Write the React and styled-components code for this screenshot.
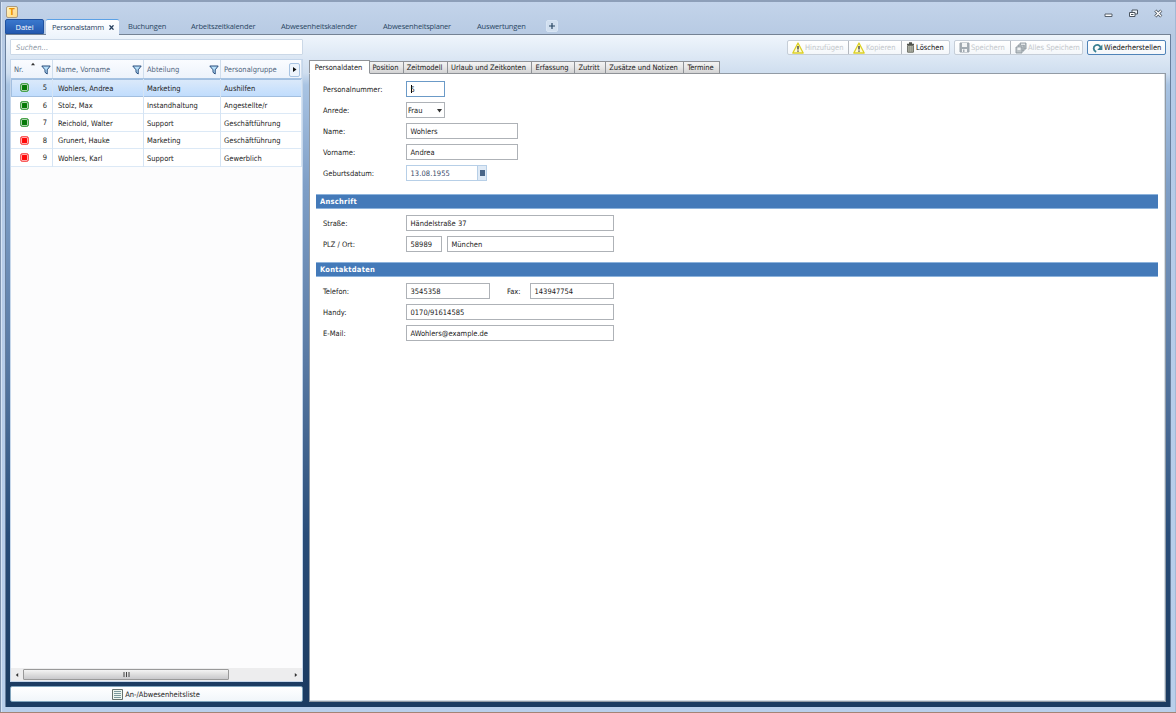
import React from "react";
import styled, { createGlobalStyle } from "styled-components";

const Global = createGlobalStyle`
  * { box-sizing: border-box; }
  body { margin: 0; overflow: hidden; }
  body, input, button { font: 7.5px "DejaVu Sans Condensed", "DejaVu Sans", sans-serif; color: #222; }
  svg { display: block; flex: none; }
`;

const Text = styled.span`
  white-space: pre;
  letter-spacing: ${(p) => p.$ls ?? 0}px;
`;

const Window = styled.div`
  width: 1176px;
  height: 713px;
  display: flex;
  flex-direction: column;
  padding: 0 5px;
  background: linear-gradient(#c3d4ea, #b7cae3 34px, #b5cbe8 70px, #b9cfeb);
  border-top: 2px solid #8d9fb8;
  border-bottom: 1px solid #a38476;
  box-shadow: inset 1px 0 #8195b0, inset 2px 0 #d7e5f6, inset -1px 0 #a3b9d5;
`;

const TitleBar = styled.header`
  height: 17px;
  display: flex;
  justify-content: space-between;
  padding: 4px 8px 0 1px;
`;

const AppIcon = styled.div`
  width: 12px;
  height: 12px;
  border: 1px solid #a99b83;
  border-radius: 2px;
  background: linear-gradient(135deg, #fff3c5, #ffd981);
  color: #eb9200;
  font-size: 9px;
  font-weight: bold;
  line-height: 10px;
  text-align: center;
`;

const Controls = styled.div`
  display: flex;
  gap: 16px;
  padding-top: 3px;
`;

const MainTabs = styled.nav`
  height: 16px;
  display: flex;
  align-items: stretch;
  font: 7.5px "Open Sans", "Noto Sans", sans-serif;
  color: #294663;
  border-bottom: 1px solid #748294;
`;

const FileTab = styled.div`
  width: 39px;
  display: flex;
  align-items: center;
  justify-content: center;
  border-radius: 2px 2px 0 0;
  border: 1px solid #1f519f;
  background: linear-gradient(#3a78cd, #2459b0);
  color: #fff;
`;

const MainTab = styled.div`
  display: flex;
  align-items: center;
  width: ${(p) => p.$w}px;
  padding-bottom: 2px;
`;

const ActiveTab = styled(MainTab)`
  margin: 0 9px -1px 2px;
  justify-content: space-between;
  padding: 0 5px 2px 6px;
  border-top: 1px solid #5ba1e6;
  border-radius: 2px 2px 0 0;
  background: linear-gradient(#fff, #eff5fc);
  color: #283f5d;
`;

const CloseMark = styled.svg`
  margin-top: 2px;
`;

const AddTab = styled.div`
  width: 12px;
  height: 12px;
  margin-top: 1px;
  border: 1px solid #d8e5f4;
  border-radius: 2px;
  background: #d1dfef;
  display: grid;
  place-items: center;
`;

const Body = styled.main`
  height: 672px;
  display: flex;
  gap: 6px;
  padding: 4px 4px 5px 4px;
  border: solid #687f9d;
  border-width: 0 1px;
  background: linear-gradient(#eff5fc, #cfdeef 38px, #a9c4e3 50px, #7f9fc7 150px, #5879a3 330px, #294d79 500px, #1c3c62 650px);
`;

const Sidebar = styled.aside`
  width: 293px;
  display: flex;
  flex-direction: column;
`;

const Search = styled.div`
  height: 16px;
  padding: 0 5px;
  display: flex;
  align-items: center;
  background: #fff;
  border: 1px solid #cbd8e7;
  border-radius: 1px;
  color: #8d98a5;
  font-style: italic;
`;

const Grid = styled.section`
  height: 623px;
  margin: 4px 0;
  display: flex;
  flex-direction: column;
  background: #fcfcfd;
  border: 1px solid #c5d6ea;
`;

const gridColumns = "42px 91px 77px 1fr";

const GridHeader = styled.div`
  height: 19px;
  display: grid;
  grid-template-columns: ${gridColumns};
  background: linear-gradient(#fafcff, #edf3fb);
  border-bottom: 1px solid #a5c2e2;
`;

const HeadCell = styled.div`
  display: flex;
  align-items: center;
  justify-content: space-between;
  padding: 1px 1px 0 3px;
  border-right: 1px solid #d0deed;
  color: #51657e;
`;

const SortMark = styled.div`
  align-self: flex-start;
  padding: 1px 0 0 1px;
`;

const ScrollNext = styled.div`
  width: 11px;
  height: 14px;
  display: grid;
  place-items: center;
  border: 1px solid #a9c4e2;
  border-radius: 2px;
  background: #edf4fc;
`;

const Row = styled.div`
  height: 17.5px;
  display: grid;
  grid-template-columns: ${gridColumns};
  background: ${(p) => (p.$selected ? "linear-gradient(#dceafa, #bfdcfd)" : "#fff")};
  box-shadow: ${(p) => (p.$selected ? "inset 0 0 0 1px #a2bfe0" : "inset 0 -1px #dce9f6")};
`;

const Cell = styled.div`
  display: flex;
  align-items: center;
  padding-top: 1px;
  padding-left: ${(p) => p.$pl ?? 3}px;
  border-right: 1px solid #d5e4f4;
  color: #1d1d1d;
`;

const NumberCell = styled(Cell)`
  justify-content: space-between;
  padding: 0 5px 0 9px;
`;

const Status = styled.i`
  width: 9px;
  height: 9px;
  border-radius: 2.5px;
  border: 1px solid ${(p) => p.$ring};
  background: ${(p) => p.$color};
  box-shadow: inset 0 0 0 1px #ffffffaa;
`;

const Scrollbar = styled.div`
  height: 13px;
  margin-top: auto;
  display: flex;
  align-items: center;
  background: #ededee;
  padding: 1px 4px;
`;

const Thumb = styled.div`
  width: 206px;
  height: 11px;
  margin: 0 auto 0 4px;
  display: grid;
  place-items: center;
  border: 1px solid #999;
  border-radius: 1px;
  background: linear-gradient(#f4f4f4, #dedede 50%, #c9c9cc);
`;

const ListButton = styled.button`
  height: 16px;
  padding: 0 1px 0 0;
  display: flex;
  align-items: center;
  justify-content: center;
  gap: 2px;
  border: 1px solid #82a5bd;
  border-radius: 2px;
  background: linear-gradient(#fff, #f1f6fa);
`;

const Content = styled.section`
  flex: 1;
  display: flex;
  flex-direction: column;
`;

const Toolbar = styled.div`
  height: 21px;
  display: flex;
  justify-content: flex-end;
  align-items: flex-start;
  gap: 4px;
  padding-top: 1px;
`;

const ButtonGroup = styled.div`
  height: 15px;
  display: flex;
  border: 1px solid ${(p) => (p.$active ? "#4f83b8" : "#c6ced8")};
  border-radius: 2px;
  background: linear-gradient(#fff, #f4f7fa);
`;

const ToolButton = styled.div`
  width: ${(p) => p.$w}px;
  display: flex;
  align-items: center;
  padding-left: 4px;
  gap: 1px;
  color: ${(p) => (p.$disabled ? "#c3c7cb" : "#111")};
  & + & { border-left: 1px solid #b3b8bf; }
`;

const Tabs = styled.div`
  height: 14px;
  display: flex;
  align-items: flex-end;
  position: relative;
  z-index: 1;
  margin-bottom: -1px;
`;

const Tab = styled.div`
  width: ${(p) => p.$w}px;
  height: ${(p) => (p.$active ? 14 : 13)}px;
  display: flex;
  align-items: center;
  justify-content: center;
  padding-right: 2px;
  border: 1px solid #8f9297;
  border-left-width: ${(p) => (p.$active ? 1 : 0)}px;
  border-bottom-color: ${(p) => (p.$active ? "#fff" : "#8f9297")};
  background: ${(p) => (p.$active ? "#fff" : "linear-gradient(#f3f3f3, #e8e8e8 45%, #d2d2d3)")};
`;

const Panel = styled.div`
  flex: 1;
  border: 1px solid #929ba5;
  box-shadow: inset -1px -1px #d5dee6;
  background: #fff;
  padding: 7px 7px 0 6px;
`;

const Fields = styled.div`
  display: flex;
  flex-direction: column;
  gap: 5px;
  padding: 0 7px;
`;

const Field = styled.div`
  height: 16px;
  display: flex;
  align-items: center;
`;

const Label = styled.div`
  width: ${(p) => p.$w ?? 83}px;
  padding-left: ${(p) => p.$pl ?? 0}px;
`;

const Input = styled.div`
  width: ${(p) => p.$w}px;
  height: 16px;
  display: flex;
  align-items: center;
  justify-content: space-between;
  padding-left: ${(p) => p.$pl ?? 3.5}px;
  margin-right: ${(p) => p.$mr ?? 0}px;
  border: 1px solid ${(p) => p.$border ?? "#aeb2b7"};
  color: ${(p) => p.$color ?? "#222"};
  background: #fff;
`;

const Caret = styled.i`
  display: inline-block;
  width: 1px;
  height: 8px;
  margin-right: -1px;
  vertical-align: -1px;
  background: #000;
`;

const SelectArrow = styled.div`
  width: 7px;
`;

const DateButton = styled.div`
  width: 9px;
  height: 14px;
  display: grid;
  place-items: center;
  border-left: 1px solid #b7cfe7;
  background: #dfeaf6;
`;

const DateMark = styled.i`
  width: 5px;
  height: 6px;
  background: #496587;
`;

const Section = styled.h2`
  height: 15px;
  margin: ${(p) => p.$mt}px 0 6px;
  display: flex;
  align-items: center;
  padding-left: 4px;
  border: solid #8db3dc;
  border-width: 1px 0;
  background: #447ab9;
  color: #fff;
  font: bold 7.5px "DejaVu Sans Condensed", "DejaVu Sans", sans-serif;
`;

const Filter = () => (
  <svg width="10" height="10" viewBox="0 0 10 10"><path d="M.8 1h8.4L6.2 4.8V9L4 7.3V4.8Z" fill="#b8e0fa" stroke="#284d7d" /></svg>
);
const Triangle = ({ d, color = "#333", size = 5 }) => (
  <svg width={size} height={size} viewBox="0 0 5 5"><path d={d} fill={color} /></svg>
);
const Warning = () => (
  <svg width="12" height="12" viewBox="0 0 12 12"><path d="M6 1 11.2 11H.8Z" fill="#fffbd0" stroke="#ddd126" strokeWidth="1.3" strokeLinejoin="round" /><path d="M6 4v3.5M6 8.5v1.2" stroke="#222" strokeWidth="1.2" /></svg>
);
const Trash = () => (
  <svg width="9" height="11" viewBox="0 0 9 11"><path d="M3 1h3M1 2.5h7" stroke="#50534d" strokeWidth="1.4" /><path d="M1.6 3.5h5.8v6.7H1.6Z" fill="#b7b9ad" stroke="#6b6e65" /><path d="M3.5 4v6M5.5 4v6M2 6h5M2 8h5" stroke="#85887f" strokeWidth=".5" /></svg>
);
const Disk = () => (
  <svg width="11" height="11" viewBox="0 0 11 11"><path d="M1 1h9v9H1Z" fill="#a4acb3" stroke="#9ba4ac" /><path d="M3 1h5v4H3ZM3 7h5v3H3Z" fill="#f3f5f6" /><path d="M4 7.5h1.5V10H4Z" fill="#a4acb3" /></svg>
);
const Disks = () => (
  <svg width="12" height="12" viewBox="0 0 12 12"><g fill="#bdc4c8" stroke="#8e999f" strokeWidth=".9"><path d="M5 1h6v6H5Z" /><path d="M3 3h6v6H3Z" /><path d="M1 5h6v6H1Z" /></g><path d="M2.5 5.5h3V8h-3ZM6 1.8h4v1H6Z" fill="#f2f4f5" /></svg>
);
const Restore = () => (
  <svg width="11" height="10" viewBox="0 0 11 10"><path d="M4.2 8.8C1 7.6.9 3.7 3.6 2.3 5.7 1.2 7.6 2.4 8.4 4" fill="none" stroke="#397f91" strokeWidth="1.8" /><path d="M10.4 1.5V7H5.2Z" fill="#397f91" /></svg>
);
const ListIcon = () => (
  <svg width="11" height="11" viewBox="0 0 11 11"><path d="M.5.5h10v10H.5Z" fill="#eef6ef" stroke="#65716d" /><path d="M2 2.5h7M2 4.5h7M2 6.5h7M2 8.5h7" stroke="#5d8188" strokeWidth=".8" /></svg>
);

const people = [
  ["5", "Wohlers, Andrea", "Marketing", "Aushilfen", true],
  ["6", "Stolz, Max", "Instandhaltung", "Angestellte/r", true],
  ["7", "Reichold, Walter", "Support", "Geschäftführung", true],
  ["8", "Grunert, Hauke", "Marketing", "Geschäftführung", false],
  ["9", "Wohlers, Karl", "Support", "Gewerblich", false],
];

const mainTabs = [
  ["Buchungen", 63], ["Arbeitszeitkalender", 90], ["Abwesenheitskalender", 102], ["Abwesenheitsplaner", 94], ["Auswertungen", 69],
];

const detailTabs = [
  ["Personaldaten", 61], ["Position", 34], ["Zeitmodell", 44], ["Urlaub und Zeitkonten", 84],
  ["Erfassung", 43], ["Zutritt", 31], ["Zusätze und Notizen", 78], ["Termine", 36],
];

export default function App() {
  return (
    <Window>
      <Global />
      <TitleBar>
        <AppIcon>T</AppIcon>
        <Controls>
          <svg width="9" height="9" viewBox="0 0 9 9"><path d="M1 5h7v2.5H1Z" fill="#fff" stroke="#57616d" /></svg>
          <svg width="9" height="9" viewBox="0 0 9 9"><path d="M3 1h5.5v4H3Z" fill="#eef4fb" stroke="#4a545f" /><path d="M.5 3.5H6v4H.5Z" fill="#fff" stroke="#4a545f" /><path d="M2 5.5h2.5" stroke="#4a545f" /></svg>
          <svg width="9" height="9" viewBox="0 0 9 9"><path d="m1.3 1.5 6 6M7.3 1.5l-6 6" stroke="#4a545f" strokeWidth="3" /><path d="m1.5 1.7 5.6 5.6M7.1 1.7 1.5 7.3" stroke="#fff" strokeWidth="1.3" /></svg>
        </Controls>
      </TitleBar>
      <MainTabs>
        <FileTab><Text $ls={-0.1}>Datei</Text></FileTab>
        <ActiveTab $w={73}>
          <Text $ls={-0.22}>Personalstamm</Text>
          <CloseMark width="5" height="5" viewBox="0 0 5 5"><path d="m.5.3 4 4.4M4.5.3l-4 4.4" stroke="#263f5d" strokeWidth="1.3" /></CloseMark>
        </ActiveTab>
        {mainTabs.map(([name, w]) => <MainTab key={name} $w={w}><Text $ls={-0.18}>{name}</Text></MainTab>)}
        <AddTab><svg width="6" height="6" viewBox="0 0 6 6"><path d="M3 0v6M0 3h6" stroke="#294663" strokeWidth="1.2" /></svg></AddTab>
      </MainTabs>
      <Body>
        <Sidebar>
          <Search><Text $ls={0.1}>Suchen...</Text></Search>
          <Grid>
            <GridHeader>
              <HeadCell><Text>Nr.</Text><SortMark><Triangle d="M2.5 1 5 4H0Z" size={4} /></SortMark><Filter /></HeadCell>
              <HeadCell><Text>Name, Vorname</Text><Filter /></HeadCell>
              <HeadCell><Text>Abteilung</Text><Filter /></HeadCell>
              <HeadCell><Text>Personalgruppe</Text><ScrollNext><Triangle d="M1 0 4.5 2.5 1 5Z" color="#111" /></ScrollNext></HeadCell>
            </GridHeader>
            {people.map(([nr, name, dept, group, present]) => (
              <Row key={nr} $selected={nr === "5"}>
                <NumberCell><Status $color={present ? "#067a08" : "#ff0808"} $ring={present ? "#46a34b" : "#f95b5b"} /><Text>{nr}</Text></NumberCell>
                <Cell $pl={5}><Text>{name}</Text></Cell>
                <Cell><Text>{dept}</Text></Cell>
                <Cell><Text>{group}</Text></Cell>
              </Row>
            ))}
            <Scrollbar>
              <Triangle d="M4 0v5L1 2.5Z" size={4} />
              <Thumb><svg width="7" height="5" viewBox="0 0 7 5"><path d="M1 0v5M3.5 0v5M6 0v5" stroke="#444" /></svg></Thumb>
              <Triangle d="M1 0v5l3-2.5Z" size={4} />
            </Scrollbar>
          </Grid>
          <ListButton><ListIcon /><Text>An-/Abwesenheitsliste</Text></ListButton>
        </Sidebar>
        <Content>
          <Toolbar>
            <ButtonGroup>
              <ToolButton $w={60} $disabled><Warning /><Text>Hinzufügen</Text></ToolButton>
              <ToolButton $w={53} $disabled><Warning /><Text>Kopieren</Text></ToolButton>
              <ToolButton $w={48}><Trash /><Text>Löschen</Text></ToolButton>
            </ButtonGroup>
            <ButtonGroup>
              <ToolButton $w={55} $disabled><Disk /><Text>Speichern</Text></ToolButton>
              <ToolButton $w={72} $disabled><Disks /><Text>Alles Speichern</Text></ToolButton>
            </ButtonGroup>
            <ButtonGroup $active>
              <ToolButton $w={77}><Restore /><Text>Wiederherstellen</Text></ToolButton>
            </ButtonGroup>
          </Toolbar>
          <Tabs>
            {detailTabs.map(([name, w], i) => <Tab key={name} $w={w} $active={i === 0}><Text $ls={-0.05}>{name}</Text></Tab>)}
          </Tabs>
          <Panel>
            <Fields>
              <Field><Label><Text>Personalnummer:</Text></Label><Input $w={39} $border="#6b9ac7"><Text><Caret />5</Text></Input></Field>
              <Field><Label><Text>Anrede:</Text></Label><Input $w={39} $pl={1}><Text>Frau</Text><SelectArrow><Triangle d="M0 1h5L2.5 4.5Z" /></SelectArrow></Input></Field>
              <Field><Label><Text>Name:</Text></Label><Input $w={112}><Text>Wohlers</Text></Input></Field>
              <Field><Label><Text>Vorname:</Text></Label><Input $w={112}><Text>Andrea</Text></Input></Field>
              <Field><Label><Text>Geburtsdatum:</Text></Label><Input $w={81} $border="#b7cfe7" $color="#3b4c6b"><Text $ls={0.08}>13.08.1955</Text><DateButton><DateMark /></DateButton></Input></Field>
            </Fields>
            <Section $mt={13}><Text $ls={0.25}>Anschrift</Text></Section>
            <Fields>
              <Field><Label><Text>Straße:</Text></Label><Input $w={208}><Text>Händelstraße 37</Text></Input></Field>
              <Field><Label><Text>PLZ / Ort:</Text></Label><Input $w={36} $mr={5}><Text>58989</Text></Input><Input $w={167}><Text>München</Text></Input></Field>
            </Fields>
            <Section $mt={10}><Text $ls={0.25}>Kontaktdaten</Text></Section>
            <Fields>
              <Field><Label><Text>Telefon:</Text></Label><Input $w={84}><Text>3545358</Text></Input><Label $w={40} $pl={17}><Text>Fax:</Text></Label><Input $w={84}><Text>143947754</Text></Input></Field>
              <Field><Label><Text>Handy:</Text></Label><Input $w={208}><Text>0170/91614585</Text></Input></Field>
              <Field><Label><Text>E-Mail:</Text></Label><Input $w={208}><Text>AWohlers@example.de</Text></Input></Field>
            </Fields>
          </Panel>
        </Content>
      </Body>
    </Window>
  );
}
